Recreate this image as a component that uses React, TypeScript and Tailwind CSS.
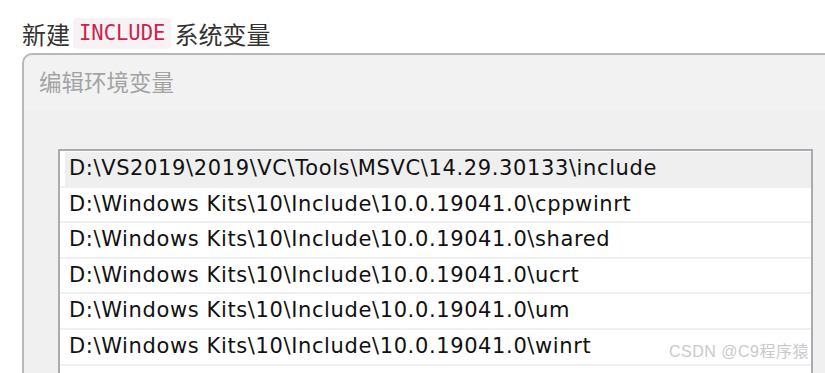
import React from "react";

const rows = [
  "D:\\VS2019\\2019\\VC\\Tools\\MSVC\\14.29.30133\\include",
  "D:\\Windows Kits\\10\\Include\\10.0.19041.0\\cppwinrt",
  "D:\\Windows Kits\\10\\Include\\10.0.19041.0\\shared",
  "D:\\Windows Kits\\10\\Include\\10.0.19041.0\\ucrt",
  "D:\\Windows Kits\\10\\Include\\10.0.19041.0\\um",
  "D:\\Windows Kits\\10\\Include\\10.0.19041.0\\winrt",
];

export default function App() {
  return (
    <div className="relative w-[825px] h-[373px] overflow-hidden bg-white">
      <div
        className="pl-[22px] pt-[18px] h-[53px] flex items-start text-[24px] leading-[32px] text-[#333]"
        style={{ fontFamily: '"Noto Sans CJK SC", "Noto Sans", sans-serif' }}
      >
        <span>新建</span>
        <span
          className="mx-[3px] px-[6px] rounded-[4px] bg-[#f9f2f4] text-[#c7254e] text-[20.5px] leading-[31px]"
          style={{ fontFamily: '"DejaVu Sans Mono", "Liberation Mono", monospace' }}
        >
          INCLUDE
        </span>
        <span>系统变量</span>
      </div>
      <div className="ml-[22px] w-[820px] border-l-2 border-t-2 border-[#b8b8b8] rounded-tl-[10px] bg-[#f0f0f0] flex flex-col">
        <div
          className="h-[55px] shrink-0 bg-[#f2f2f3] rounded-tl-[10px] pl-[15px] pt-[11px] text-[22.5px] leading-[30px] text-[#a3a3a3]"
          style={{ fontFamily: '"Noto Sans CJK SC", sans-serif' }}
        >
          编辑环境变量
        </div>
        <div className="pl-[34px] pt-[39px] shrink-0">
          <div className="relative w-[755px] h-[240px] border-l-2 border-t-2 border-r-2 border-[#a9abb0] bg-white pt-[1px]">
            {rows.map((r, i) => (
              <div
                key={i}
                className="h-[35.6px] border-b-2 border-[#f0f0f0] pl-[5px]"
              >
                <div
                  className={`h-full flex items-center pl-[4px] text-[21px] tracking-[0.62px] text-[#111] ${
                    i === 0 ? "bg-[#efefef]" : ""
                  }`}
                  style={{ fontFamily: '"DejaVu Sans", "Noto Sans", sans-serif' }}
                >
                  {r}
                </div>
              </div>
            ))}
            <div
              className="absolute right-[2px] top-[189px] text-[16px] text-[#cacaca] tracking-[0.5px]"
              style={{ fontFamily: '"Liberation Sans", "Noto Sans CJK SC", sans-serif' }}
            >
              CSDN @C9程序猿
            </div>
          </div>
        </div>
      </div>
    </div>
  );
}
